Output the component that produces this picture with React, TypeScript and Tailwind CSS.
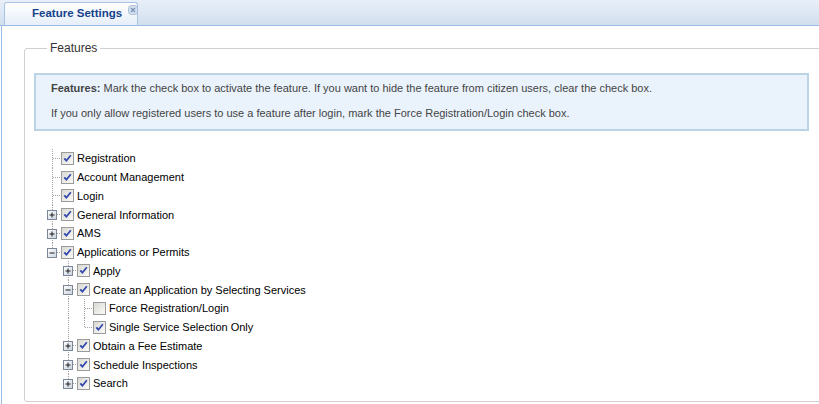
import React from "react"

type Col = "blank" | "line" | "tee" | "end"
type Exp = "plus" | "minus" | null

type Row = {
    label: string
    checked: boolean
    cols: Col[]
    exp: Exp
}

const rows: Row[] = [
    { label: "Registration", checked: true, cols: ["tee"], exp: null },
    { label: "Account Management", checked: true, cols: ["tee"], exp: null },
    { label: "Login", checked: true, cols: ["tee"], exp: null },
    { label: "General Information", checked: true, cols: ["tee"], exp: "plus" },
    { label: "AMS", checked: true, cols: ["tee"], exp: "plus" },
    { label: "Applications or Permits", checked: true, cols: ["end"], exp: "minus" },
    { label: "Apply", checked: true, cols: ["blank", "tee"], exp: "plus" },
    { label: "Create an Application by Selecting Services", checked: true, cols: ["blank", "tee"], exp: "minus" },
    { label: "Force Registration/Login", checked: false, cols: ["blank", "line", "tee"], exp: null },
    { label: "Single Service Selection Only", checked: true, cols: ["blank", "line", "end"], exp: null },
    { label: "Obtain a Fee Estimate", checked: true, cols: ["blank", "tee"], exp: "plus" },
    { label: "Schedule Inspections", checked: true, cols: ["blank", "tee"], exp: "plus" },
    { label: "Search", checked: true, cols: ["blank", "end"], exp: "plus" },
]

// one 16px column of the tree: dotted elbow lines and the +/- toggle
function Elbow({ type, exp }: { type: Col; exp: Exp }) {
    const dot = { stroke: "#a3a3a3", strokeWidth: 1, strokeDasharray: "1 1" }
    return (
        <svg width="16" height="19" viewBox="0 0 16 19" className="shrink-0 block">
            {type === "line" && <line x1="8.5" y1="0" x2="8.5" y2="19" {...dot} />}
            {type === "tee" && <line x1="8.5" y1="0" x2="8.5" y2="19" {...dot} />}
            {type === "end" && <line x1="8.5" y1="0" x2="8.5" y2="10" {...dot} />}
            {(type === "tee" || type === "end") && <line x1="9" y1="9.5" x2="16" y2="9.5" {...dot} />}
            {exp && (
                <g>
                    <defs>
                        <linearGradient id="expg" x1="0" y1="0" x2="1" y2="1">
                            <stop offset="0" stopColor="#ffffff" />
                            <stop offset="1" stopColor="#c9d3e0" />
                        </linearGradient>
                    </defs>
                    <rect x="3.5" y="5.5" width="9" height="9" fill="url(#expg)" stroke="#7b8796" />
                    <line x1="5.5" y1="10" x2="10.5" y2="10" stroke="#1a1a1a" strokeWidth="1" />
                    {exp === "plus" && <line x1="8" y1="7.5" x2="8" y2="12.5" stroke="#1a1a1a" strokeWidth="1" />}
                </g>
            )}
        </svg>
    )
}

function CheckBox({ checked }: { checked: boolean }) {
    return (
        <svg width="13" height="13" viewBox="0 0 13 13" className="shrink-0 block">
            <defs>
                <linearGradient id="cbg" x1="0" y1="0" x2="1" y2="1">
                    <stop offset="0" stopColor="#d8d8d2" />
                    <stop offset="1" stopColor="#fbfbf9" />
                </linearGradient>
            </defs>
            <rect x="0.5" y="0.5" width="12" height="12" fill="url(#cbg)" stroke="#9a9b9b" />
            {checked && (
                <path d="M3.3 6.3 L5.4 8.7 L9.8 3.2" fill="none" stroke="#3447ad" strokeWidth="1.8" />
            )}
        </svg>
    )
}

function CloseIcon() {
    return (
        <svg width="10" height="10" viewBox="0 0 10 10" className="block">
            <rect x="0.5" y="0.5" width="9" height="9" rx="3" fill="#d5e0ef" stroke="#a9bcd8" />
            <path d="M3 3 L7 7 M7 3 L3 7" stroke="#7d93b8" strokeWidth="1.4" />
        </svg>
    )
}

export default function App() {
    return (
        <div className="w-[819px] h-[404px] overflow-hidden bg-white flex flex-col font-['Liberation_Sans',Arial,sans-serif]">
            {/* tab strip */}
            <div className="h-[26px] shrink-0 flex items-end pl-[4px] bg-gradient-to-b from-[#e8eff9] to-[#d3dfef] border-b border-[#99bbe8]">
                <div className="h-[23px] w-[134px] flex items-center pl-[27px] rounded-t-[3px] border border-b-0 border-[#a9c3e6] bg-gradient-to-b from-[#ffffff] to-[#e6eef9]">
                    <span className="text-[11.5px] font-bold text-[#15428b] leading-none whitespace-nowrap">Feature Settings</span>
                    <span className="ml-[6px] -mt-[8px] shrink-0">
                        <CloseIcon />
                    </span>
                </div>
            </div>

            {/* panel body */}
            <div className="flex-1 ml-[1px] border-l border-[#99bbe8] pl-[22px]">
                <fieldset className="mt-[15px] w-[810px] h-[361px] border border-[#d0d0d0] rounded-[3px] px-[9px]">
                    <legend className="ml-[13px] px-[3px] text-[12px] leading-[14px] text-[#333]">Features</legend>

                    <div className="mt-[18px] w-[775px] h-[58px] border-2 border-[#bcd3e4] bg-[#eaf3fc] pl-[15px] pt-[6px] text-[11px] leading-[14px] text-[#444]">
                        <p>
                            <span className="font-bold">Features:</span> Mark the check box to activate the feature. If you want to hide the feature from citizen users, clear the check box.
                        </p>
                        <p className="mt-[11px]">
                            If you only allow registered users to use a feature after login, mark the Force Registration/Login check box.
                        </p>
                    </div>

                    <div className="mt-[18px] ml-[10px]">
                        {rows.map((r, i) => (
                            <div key={i} className="h-[18.75px] flex items-center">
                                {r.cols.map((c, j) => (
                                    <Elbow key={j} type={c} exp={j === r.cols.length - 1 ? r.exp : null} />
                                ))}
                                <span className="ml-[1px]">
                                    <CheckBox checked={r.checked} />
                                </span>
                                <span className="ml-[3px] text-[11px] leading-[14px] text-black whitespace-nowrap">{r.label}</span>
                            </div>
                        ))}
                    </div>
                </fieldset>
            </div>
        </div>
    )
}
